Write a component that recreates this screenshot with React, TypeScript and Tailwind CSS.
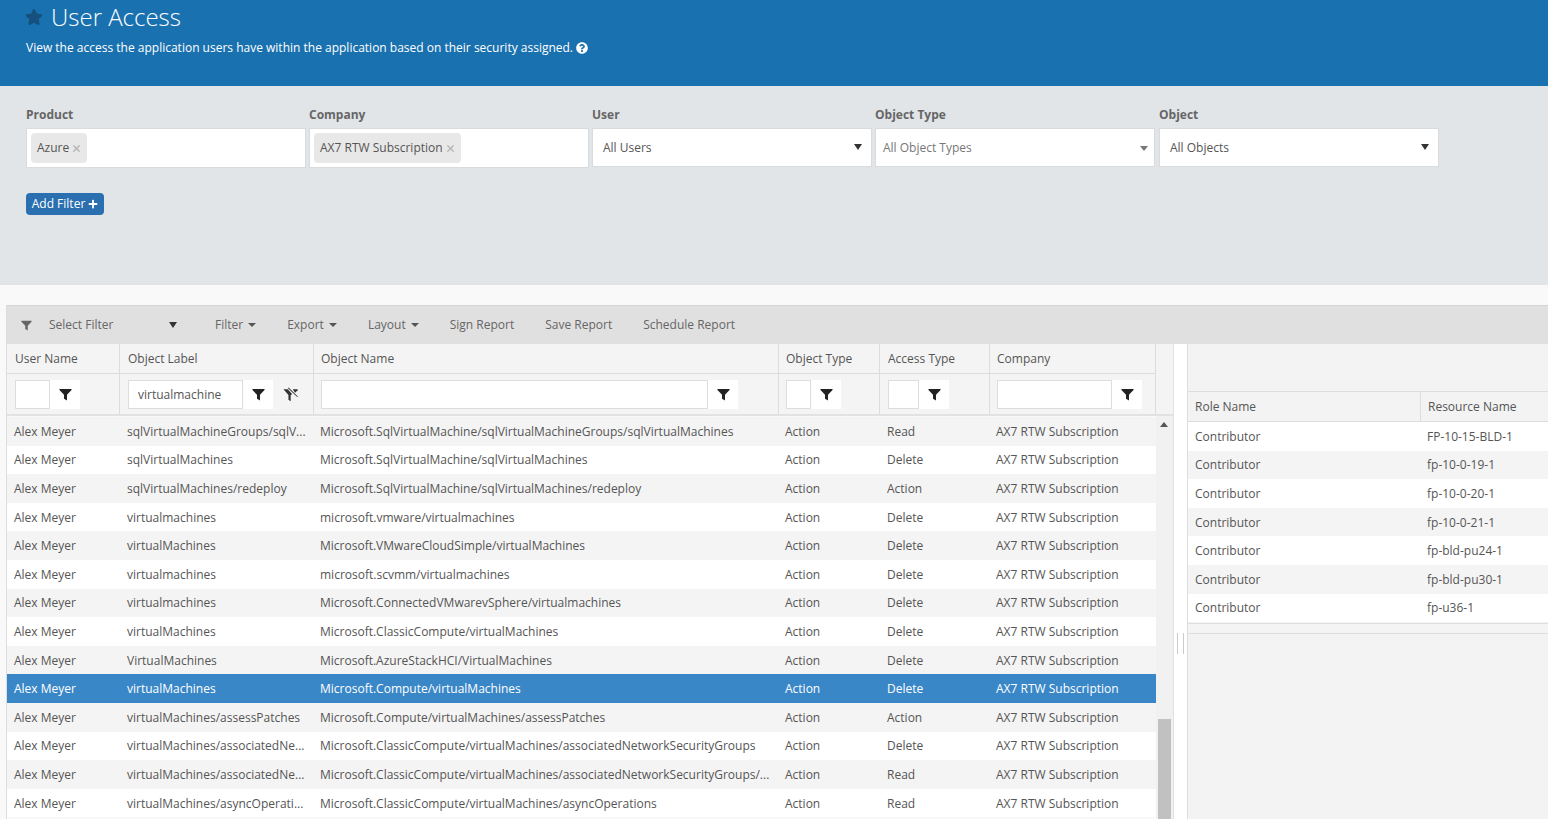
import { X } from "lucide-react";
import { FaPlus, FaQuestionCircle, FaStar } from "react-icons/fa";

const FONT = "font-['Open_Sans',sans-serif]";

const COLS = [
  { title: "User Name", cell: "w-[113px] pl-[7px]", head: "w-[113px] pl-[8px]", box: "w-[113px] pl-[8px]", filter: "w-[35px]" },
  { title: "Object Label", cell: "w-[194px] pl-[7px]", head: "w-[194px] pl-[8px]", box: "w-[194px] pl-[8px]", filter: "w-[115px]" },
  { title: "Object Name", cell: "w-[465px] pl-[6px]", head: "w-[465px] pl-[7px]", box: "w-[465px] pl-[7px]", filter: "w-[387px]" },
  { title: "Object Type", cell: "w-[101px] pl-[6px]", head: "w-[101px] pl-[7px]", box: "w-[101px] pl-[7px]", filter: "w-[25px]" },
  { title: "Access Type", cell: "w-[110px] pl-[7px]", head: "w-[110px] pl-[8px]", box: "w-[110px] pl-[8px]", filter: "w-[31px]" },
  { title: "Company", cell: "w-[166px] pl-[6px]", head: "w-[166px] pl-[7px]", box: "w-[166px] pl-[7px]", filter: "w-[115px]" },
];

const ROWS = [
  ["sqlVirtualMachineGroups/sqlV...", "Microsoft.SqlVirtualMachine/sqlVirtualMachineGroups/sqlVirtualMachines", "Read"],
  ["sqlVirtualMachines", "Microsoft.SqlVirtualMachine/sqlVirtualMachines", "Delete"],
  ["sqlVirtualMachines/redeploy", "Microsoft.SqlVirtualMachine/sqlVirtualMachines/redeploy", "Action"],
  ["virtualmachines", "microsoft.vmware/virtualmachines", "Delete"],
  ["virtualMachines", "Microsoft.VMwareCloudSimple/virtualMachines", "Delete"],
  ["virtualmachines", "microsoft.scvmm/virtualmachines", "Delete"],
  ["virtualmachines", "Microsoft.ConnectedVMwarevSphere/virtualmachines", "Delete"],
  ["virtualMachines", "Microsoft.ClassicCompute/virtualMachines", "Delete"],
  ["VirtualMachines", "Microsoft.AzureStackHCI/VirtualMachines", "Delete"],
  ["virtualMachines", "Microsoft.Compute/virtualMachines", "Delete"],
  ["virtualMachines/assessPatches", "Microsoft.Compute/virtualMachines/assessPatches", "Action"],
  ["virtualMachines/associatedNe...", "Microsoft.ClassicCompute/virtualMachines/associatedNetworkSecurityGroups", "Delete"],
  ["virtualMachines/associatedNe...", "Microsoft.ClassicCompute/virtualMachines/associatedNetworkSecurityGroups/...", "Read"],
  ["virtualMachines/asyncOperati...", "Microsoft.ClassicCompute/virtualMachines/asyncOperations", "Read"],
];

const ROLES = ["FP-10-15-BLD-1", "fp-10-0-19-1", "fp-10-0-20-1", "fp-10-0-21-1", "fp-bld-pu24-1", "fp-bld-pu30-1", "fp-u36-1"];

const Funnel = ({ className }: { className?: string }) => (
  <svg viewBox="0 0 14 14" className={className} fill="currentColor">
    <path d="M0.5 1h13v1.2L8.6 7.4V13.5L5.4 11.6V7.4L0.5 2.2z" />
  </svg>
);

const FunnelClear = () => (
  <svg viewBox="0 0 16 16" className="w-[15px] h-[15px] text-[#333]" fill="currentColor">
    <path d="M0.5 2.5h4.6l4.6 5-1.5 1.4v6.3l-2.4-1.6V8.6z" />
    <path d="M10.4 2.5h5.1v.9l-2.6 2.6z" />
    <path d="M6 0.6l9.8 9.4-.7.7L5.3 1.3z" />
  </svg>
);

const Caret = ({ className }: { className?: string }) => (
  <span className={`inline-block w-0 h-0 border-x-transparent ${className ?? ""}`} />
);

const Tag = ({ label }: { label: string }) => (
  <span className="h-[30px] pl-[6px] pr-[5px] bg-[#e8e8e8] rounded-sm flex items-center gap-[2px] text-[#555]">
    {label}
    <X className="w-[11px] h-[11px] text-[#b5b5b5]" strokeWidth={3} />
  </span>
);

const SelectBox = ({ label, muted }: { label: string; muted?: boolean }) => (
  <div className={`h-[39px] pt-[1px] bg-white border border-[#d8dcdf] flex items-center justify-between ${muted ? "pl-[7px] pr-[6px] text-[#777]" : "pl-[10px] pr-[9px] text-[#555]"}`}>
    {label}
    {muted ? (
      <Caret className="border-x-4 border-t-[5px] border-t-[#777]" />
    ) : (
      <Caret className="border-x-4 border-t-[6px] border-t-[#333] mb-[2px]" />
    )}
  </div>
);

const Field = ({ label, className, children }: { label: string; className?: string; children: React.ReactNode }) => (
  <div className={`w-[280px] flex flex-col ${className ?? ""}`}>
    <div className="h-[17px] mb-[5px] leading-[17px] font-bold text-[#666]">{label}</div>
    {children}
  </div>
);

const MenuItem = ({ label, caret, className }: { label: string; caret?: boolean; className?: string }) => (
  <span className={`flex items-center gap-[5px] ${className ?? ""}`}>
    {label}
    {caret && <Caret className="border-x-4 border-t-4 border-t-[#555] mr-[1px]" />}
  </span>
);

export default function App() {
  return (
    <div className={`${FONT} w-[1548px] h-[819px] overflow-hidden bg-[#f9f9f9] text-[12px] text-[#555] flex flex-col`}>
      {/* header */}
      <div className="h-[86px] shrink-0 bg-[#1a71b0] pl-[26px] text-white">
        <div className="h-[33px] flex items-center gap-[8px] -ml-[1px]">
          <FaStar className="w-[18px] h-[18px] text-[#15507f]" />
          <span className="text-[24px] font-light leading-[33px]">User Access</span>
        </div>
        <div className="mt-[5px] flex items-center gap-[3px] h-[20px]">
          View the access the application users have within the application based on their security assigned.
          <FaQuestionCircle className="w-[12px] h-[12px]" />
        </div>
      </div>

      {/* filters */}
      <div className="h-[199px] shrink-0 bg-[#e1e5e8] pt-[20px] pl-[26px]">
        <div className="flex gap-[3px]">
          <Field label="Product">
            <div className="h-[40px] bg-white border border-[#d8dcdf] flex items-center pl-[4px]">
              <Tag label="Azure" />
            </div>
          </Field>
          <Field label="Company">
            <div className="h-[40px] bg-white border border-[#d8dcdf] flex items-center pl-[4px]">
              <Tag label="AX7 RTW Subscription" />
            </div>
          </Field>
          <Field label="User"><SelectBox label="All Users" /></Field>
          <Field label="Object Type"><SelectBox label="All Object Types" muted /></Field>
          <Field label="Object" className="ml-[1px]"><SelectBox label="All Objects" /></Field>
        </div>
        <button className="mt-[25px] h-[22px] w-[78px] bg-[#2a6faf] rounded-sm text-white flex items-center justify-center gap-[3px]">
          Add Filter
          <FaPlus className="w-[10px] h-[10px]" />
        </button>
      </div>

      {/* report panel */}
      <div className="mt-[20px] ml-[6px] flex-1 min-h-0 flex flex-col border-l border-[#ddd]">
        <div className="h-[39px] shrink-0 bg-[#e0e0e0] border-t border-[#d5d5d5] flex items-center text-[#666]">
          <Funnel className="ml-[14px] w-[11px] h-[11px] text-[#666]" />
          <span className="ml-[17px] w-[120px]">Select Filter</span>
          <Caret className="border-x-4 border-t-[6px] border-t-[#333]" />
          <div className="ml-[38px] flex gap-[30px]">
            <MenuItem label="Filter" caret />
            <MenuItem label="Export" caret />
            <MenuItem label="Layout" caret />
            <MenuItem label="Sign Report" />
            <MenuItem label="Save Report" className="ml-[1px]" />
            <MenuItem label="Schedule Report" className="ml-[1px]" />
          </div>
        </div>

        <div className="flex-1 min-h-0 flex">
          {/* main grid */}
          <div className="w-[1149px] shrink-0 flex flex-col">
            <div className="h-[30px] shrink-0 flex bg-[#f4f4f4] border-b border-[#ddd]">
              {COLS.map((c) => (
                <div key={c.title} className={`${c.head} flex items-center border-r border-[#ddd]`}>{c.title}</div>
              ))}
            </div>
            <div className="h-[42px] shrink-0 flex bg-[#f4f4f4] border-b-2 border-[#e2e2e2]">
              {COLS.map((c, i) => (
                <div key={c.title} className={`${c.box} flex items-center border-r border-[#ddd]`}>
                  <input
                    readOnly
                    value={i === 1 ? "virtualmachine" : ""}
                    className={`${c.filter} h-[29px] bg-white border border-[#ddd] pl-[9px] outline-none text-[#555]`}
                  />
                  <span className="w-[30px] h-[29px] pl-[1px] bg-white flex items-center justify-center text-[#222]">
                    <Funnel className="w-[13px] h-[13px]" />
                  </span>
                  {i === 1 && <span className="ml-[10px]"><FunnelClear /></span>}
                </div>
              ))}
            </div>
            <div className="flex-1 min-h-0 pt-[1px]">
              {ROWS.map((r, i) => {
                const selected = i === 9;
                const rowCls = selected
                  ? "bg-[#3a87c8] text-white"
                  : i % 2 === 0
                    ? "bg-[#f4f4f4]"
                    : "bg-white";
                return (
                  <div key={i} className={`h-[28.6px] pt-[1px] flex items-center whitespace-nowrap ${rowCls}`}>
                    <div className={COLS[0].cell}>Alex Meyer</div>
                    <div className={COLS[1].cell}>{r[0]}</div>
                    <div className={COLS[2].cell}>{r[1]}</div>
                    <div className={COLS[3].cell}>Action</div>
                    <div className={COLS[4].cell}>{r[2]}</div>
                    <div className={COLS[5].cell}>AX7 RTW Subscription</div>
                  </div>
                );
              })}
            </div>
          </div>

          {/* grid header filler + scrollbar */}
          <div className="w-[17px] shrink-0 flex flex-col">
            <div className="h-[72px] shrink-0 bg-[#f4f4f4] border-b-2 border-[#e2e2e2]" />
            <div className="flex-1 bg-[#f1f1f1] flex flex-col items-center pt-[6px] pr-[1px]">
              <span className="w-0 h-0 border-x-4 border-x-transparent border-b-[5px] border-b-[#555]" />
              <div className="mt-auto w-[13px] h-[100px] bg-[#c1c1c1]" />
            </div>
          </div>

          {/* splitter */}
          <div className="w-[14px] shrink-0 bg-white flex items-start justify-center pt-[289px] gap-[5px] border-l border-[#e2e2e2]">
            <span className="w-px h-[21px] bg-[#ccc]" />
            <span className="w-px h-[21px] bg-[#ccc]" />
          </div>

          {/* right panel */}
          <div className="flex-1 min-w-0 flex flex-col bg-[#f3f3f3] border-l border-[#ddd]">
            <div className="h-[48px] shrink-0 border-b border-[#ddd]" />
            <div className="h-[30px] shrink-0 flex border-b border-[#ddd]">
              <div className="w-[233px] pl-[7px] flex items-center border-r border-[#ddd]">Role Name</div>
              <div className="flex-1 pl-[7px] flex items-center whitespace-nowrap">Resource Name</div>
            </div>
            {ROLES.map((name, i) => (
              <div key={name} className={`h-[28.6px] pt-[1px] shrink-0 flex items-center ${i % 2 === 0 ? "bg-white" : "bg-[#f4f4f4]"}`}>
                <div className="w-[232px] pl-[7px]">Contributor</div>
                <div className="pl-[7px]">{name}</div>
              </div>
            ))}
            <div className="h-[11px] shrink-0 mt-[1px] bg-[#f4f4f4] border-y border-[#ddd]" />
          </div>
        </div>
      </div>
    </div>
  );
}
